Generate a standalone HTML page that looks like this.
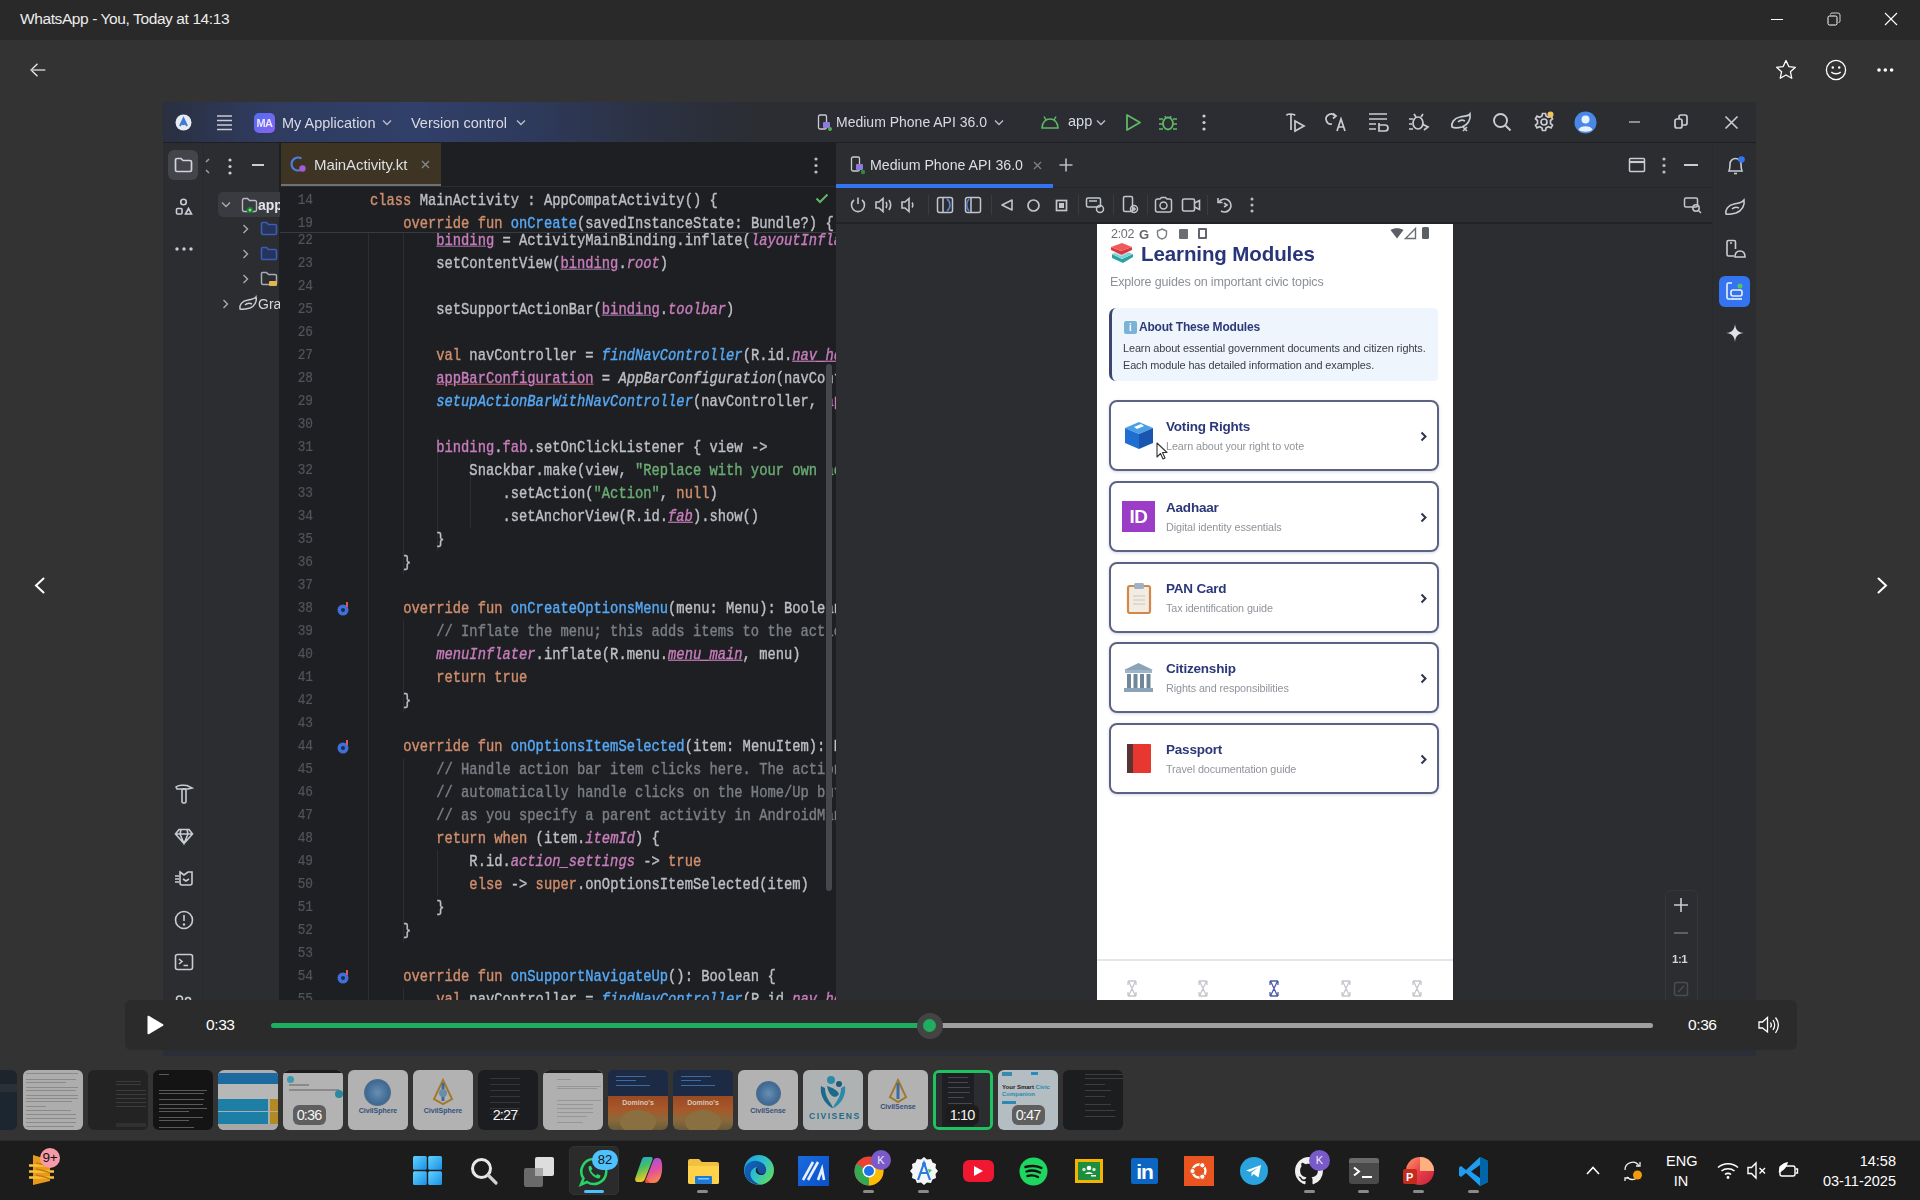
<!DOCTYPE html>
<html><head><meta charset="utf-8">
<style>
*{box-sizing:border-box;margin:0;padding:0}
html,body{width:1920px;height:1200px;overflow:hidden;background:#333333;font-family:"Liberation Sans",sans-serif;position:relative}
.a{position:absolute}
svg{position:absolute;overflow:visible}
#title{left:0;top:0;width:1920px;height:40px;background:#292929}
#title .t{left:20px;top:10px;color:#ececec;font-size:15.5px;letter-spacing:-0.4px;white-space:nowrap}
#video{left:163px;top:102px;width:1593px;height:954px;background:#1e1f22;overflow:hidden;filter:blur(0.45px)}
#ctrl{left:125px;top:1000px;width:1672px;height:50px;background:#2b2b2b;border-radius:6px}
#thumbs{left:0;top:1070px;width:1920px;height:60px}
#task{left:0;top:1140px;width:1920px;height:60px;background:#1c1c1c;border-top:1px solid #2c2c2c}
.ln{left:0;width:33px;text-align:right;font-family:"Liberation Mono",monospace;font-size:12.8px;line-height:23px;color:#50545b;white-space:pre;transform:scaleY(1.1);-webkit-text-stroke-width:0.2px}
.cd{left:90px;font-family:"Liberation Mono",monospace;font-size:13.8px;line-height:23px;color:#bcbec4;white-space:pre;transform:scaleY(1.15);-webkit-text-stroke-width:0.35px}
.k{color:#cf8e6d}.f{color:#56a8f5}.fi{color:#56a8f5;font-style:italic}.p{color:#c77dbb}.pi{color:#c77dbb;font-style:italic}
.pu{color:#c77dbb;text-decoration:underline;text-decoration-color:#8a6a9a}.piu{color:#c77dbb;font-style:italic;text-decoration:underline}
.pur{color:#c77dbb;text-decoration:underline;text-decoration-color:#c05a6a}.ti{font-style:italic}.s{color:#6aab73}.c{color:#7a7e85}
.card{left:12px;width:330px;height:71px;border:2px solid #5b6283;border-radius:8px;box-shadow:0 1px 3px rgba(80,90,160,.25)}
.ct{left:69px;font-size:13.5px;font-weight:bold;color:#2b3778;white-space:nowrap;letter-spacing:-0.2px}
.cs{left:69px;font-size:10.8px;color:#90949b;white-space:nowrap;letter-spacing:-0.1px}
.th{top:0;width:60px;height:60px;border-radius:6px;overflow:hidden}
.badge{top:35px;width:33px;height:20px;border-radius:6px;color:#f4f4f4;font-size:14.5px;line-height:20px;letter-spacing:-0.9px;text-align:center;text-indent:-1px}
.mono{font-family:"Liberation Mono",monospace}
</style></head><body>
<div id="title" class="a"><div class="t a">WhatsApp - You, Today at 14:13</div></div>

<div id="video" class="a">
 <!-- header -->
 <div class="a" style="left:0;top:0;width:1593px;height:41px;background:linear-gradient(90deg,#2a2f40 0%,#2f3b5e 6%,#31406a 16%,#2e3a5c 23%,#2c3244 30%,#2b2d33 37%,#2b2d30 100%);border-bottom:1px solid #1e1f22"></div>
 <!-- left strip -->
 <div class="a" style="left:0;top:41px;width:41px;height:857px;background:#2b2d30;border-right:1px solid #27292c"></div>
 <!-- project panel -->
 <div class="a" style="left:41px;top:41px;width:76px;height:857px;background:#2b2d30;border-right:1px solid #1e1f22"></div>
 <!-- editor -->
 <div class="a" style="left:117px;top:41px;width:556px;height:857px;background:#1e1f22"></div>
 <!-- devices panel -->
 <div class="a" style="left:673px;top:41px;width:876px;height:857px;background:#2b2d30;border-left:1px solid #1e1f22"></div>
 <!-- right strip -->
 <div class="a" style="left:1549px;top:41px;width:44px;height:857px;background:#2b2d30;border-left:1px solid #28292c"></div>
 <!-- bottom band -->
 <div class="a" style="left:0;top:0;width:1593px;height:41px;color:#dfe1e5;font-size:14px">
  <!-- AS logo -->
  <svg style="left:12px;top:12px" width="17" height="17" viewBox="0 0 17 17"><circle cx="8.5" cy="8.5" r="8" fill="#e8eaf0"/><path d="M5 12 L8.5 4.5 L12 12" stroke="#3b7bd6" stroke-width="2" fill="none"/><circle cx="8.5" cy="9" r="2.2" fill="#3b7bd6"/></svg>
  <!-- hamburger -->
  <svg style="left:53px;top:12px" width="17" height="17" viewBox="0 0 17 17"><g stroke="#c9ccd3" stroke-width="1.6"><path d="M1 2H16M1 6.5H16M1 11H16M1 15.5H16"/></g></svg>
  <div class="a" style="left:91px;top:11px;width:21px;height:20px;border-radius:5px;background:linear-gradient(135deg,#4f6ef0,#8a63f2);color:#e9e6ff;font-size:11px;font-weight:bold;line-height:20px;text-align:center;letter-spacing:-0.5px">MA</div>
  <div class="a" style="left:119px;top:13px;font-size:14.5px;color:#d8dbe3">My Application</div>
  <svg style="left:219px;top:17px" width="10" height="7" viewBox="0 0 10 7"><path d="M1 1.5L5 5.5L9 1.5" stroke="#b8bcc4" stroke-width="1.4" fill="none"/></svg>
  <div class="a" style="left:248px;top:13px;font-size:14.5px;color:#d8dbe3">Version control</div>
  <svg style="left:353px;top:17px" width="10" height="7" viewBox="0 0 10 7"><path d="M1 1.5L5 5.5L9 1.5" stroke="#b8bcc4" stroke-width="1.4" fill="none"/></svg>
  <!-- device -->
  <svg style="left:654px;top:12px" width="16" height="17" viewBox="0 0 16 17"><rect x="1.5" y="1" width="8" height="14" rx="1.5" stroke="#c9ccd3" stroke-width="1.3" fill="none"/><rect x="6" y="8" width="7" height="6" rx="1" fill="#8e7bd9"/><circle cx="13" cy="15" r="2" fill="#4caf50"/></svg>
  <div class="a" style="left:673px;top:12px;font-size:14px;color:#d8dbe3">Medium Phone API 36.0</div>
  <svg style="left:831px;top:17px" width="10" height="7" viewBox="0 0 10 7"><path d="M1 1.5L5 5.5L9 1.5" stroke="#b8bcc4" stroke-width="1.4" fill="none"/></svg>
  <!-- android app -->
  <svg style="left:877px;top:13px" width="20" height="15" viewBox="0 0 20 15"><path d="M2 13 C2 7 6 4 10 4 C14 4 18 7 18 13 Z" stroke="#5fb865" stroke-width="1.6" fill="none"/><path d="M4 1.5L6 5M16 1.5L14 5" stroke="#5fb865" stroke-width="1.5"/></svg>
  <div class="a" style="left:905px;top:11px;font-size:14.5px;color:#d8dbe3">app</div>
  <svg style="left:933px;top:17px" width="10" height="7" viewBox="0 0 10 7"><path d="M1 1.5L5 5.5L9 1.5" stroke="#b8bcc4" stroke-width="1.4" fill="none"/></svg>
  <!-- run -->
  <svg style="left:962px;top:11px" width="17" height="19" viewBox="0 0 17 19"><path d="M2 2 L15 9.5 L2 17 Z" stroke="#5fb865" stroke-width="1.8" fill="none" stroke-linejoin="round"/></svg>
  <!-- debug -->
  <svg style="left:995px;top:11px" width="20" height="19" viewBox="0 0 20 19"><ellipse cx="10" cy="10.5" rx="5" ry="6" stroke="#5fb865" stroke-width="1.8" fill="none"/><path d="M1 6H5M15 6H19M1 11H5M15 11H19M1 16H5M15 16H19M7 3L8 5M13 3L12 5" stroke="#5fb865" stroke-width="1.6"/></svg>
  <!-- dots -->
  <svg style="left:1039px;top:12px" width="4" height="17" viewBox="0 0 4 17"><g fill="#c9ccd3"><circle cx="2" cy="2" r="1.6"/><circle cx="2" cy="8.5" r="1.6"/><circle cx="2" cy="15" r="1.6"/></g></svg>
  <!-- right icons -->
  <svg style="left:1122px;top:10px" width="22" height="21" viewBox="0 0 22 21"><g stroke="#c9ccd3" stroke-width="1.7" fill="none"><path d="M1.5 3.5 C2 1.5 9 1.5 10 3.5 M6 2.5 V18"/><path d="M10 9 L19 14 L10 19 Z"/></g></svg>
  <svg style="left:1164px;top:10px" width="20" height="21" viewBox="0 0 20 21"><g stroke="#c9ccd3" stroke-width="1.7" fill="none"><path d="M8 4 A5 5 0 1 0 5 12"/><path d="M6 1.5 L9 4 L6 6.5"/><path d="M10 19 L14 7 L18 19 M11.5 15 H16.5"/></g></svg>
  <svg style="left:1205px;top:10px" width="20" height="21" viewBox="0 0 20 21"><g stroke="#c9ccd3" stroke-width="1.7" fill="none"><path d="M1 2H19M1 7H19M1 12H8M1 17H8"/><path d="M11 11 V19 H17 A3 3 0 0 0 17 13 H11"/></g></svg>
  <svg style="left:1245px;top:9px" width="22" height="22" viewBox="0 0 22 22"><g stroke="#c9ccd3" stroke-width="1.7" fill="none"><ellipse cx="10" cy="12" rx="5" ry="6"/><path d="M1 8H5M1 13H4M1 18H5M15 3L13 6M6 3L8 6"/><path d="M14 13 L20 16 L16 19"/></g></svg>
  <svg style="left:1287px;top:10px" width="22" height="21" viewBox="0 0 22 21"><g stroke="#c9ccd3" stroke-width="1.7" fill="none"><path d="M2 15 C1 11 4 6 10 5 C15 4 19 4 20 2 C21 7 18 13 12 15 C8 16 4 16 2 15 Z"/><path d="M8 10 C10 8 13 8 15 9"/><path d="M13 15 L17 19 M17 15 L13 19"/></g></svg>
  <svg style="left:1329px;top:10px" width="20" height="21" viewBox="0 0 20 21"><g stroke="#c9ccd3" stroke-width="1.9" fill="none"><circle cx="8.5" cy="8.5" r="6.5"/><path d="M13.5 13.5 L18.5 18.5"/></g></svg>
  <svg style="left:1370px;top:9px" width="22" height="22" viewBox="0 0 22 22"><g stroke="#c9ccd3" stroke-width="1.7" fill="none"><path d="M10 2 L13 2 L13.6 4.6 L16 5.8 L18.5 4.7 L20 7.3 L18 9 L18 12 L20 13.7 L18.5 16.3 L16 15.2 L13.6 16.4 L13 19 L10 19 L9.4 16.4 L7 15.2 L4.5 16.3 L3 13.7 L5 12 L5 9 L3 7.3 L4.5 4.7 L7 5.8 L9.4 4.6 Z" transform="translate(-0.5,0.5)"/><circle cx="11" cy="11" r="3"/></g><circle cx="17.5" cy="3.5" r="3" fill="#f2c55c"/></svg>
  <svg style="left:1411px;top:9px" width="23" height="23" viewBox="0 0 23 23"><circle cx="11.5" cy="11.5" r="11" fill="#4a88e8"/><circle cx="11.5" cy="8.5" r="4" fill="#e9f0ff"/><path d="M4.5 18.5 C6 14 17 14 18.5 18.5 C16 21.5 7 21.5 4.5 18.5 Z" fill="#e9f0ff"/></svg>
  <div class="a" style="left:1466px;top:19px;width:11px;height:2px;background:#8b8e95"></div>
  <svg style="left:1510px;top:11px" width="17" height="17" viewBox="0 0 17 17"><g stroke="#c9ccd3" stroke-width="1.7" fill="none"><rect x="2" y="6" width="7" height="9" rx="2"/><path d="M6 6 V4 A2 2 0 0 1 8 2 H12 A2 2 0 0 1 14 4 V10 A2 2 0 0 1 12 12 H9"/></g></svg>
  <svg style="left:1561px;top:13px" width="15" height="15" viewBox="0 0 15 15"><path d="M1.5 1.5L13.5 13.5M13.5 1.5L1.5 13.5" stroke="#c9ccd3" stroke-width="1.6"/></svg>
 </div>

 <!-- left strip icons -->
 <div class="a" style="left:5px;top:48px;width:30px;height:30px;border-radius:6px;background:#43454a"></div>
 <svg style="left:11px;top:55px" width="19" height="16" viewBox="0 0 19 16"><path d="M1.5 3 A1.5 1.5 0 0 1 3 1.5 H7 L9 3.5 H16 A1.5 1.5 0 0 1 17.5 5 V13 A1.5 1.5 0 0 1 16 14.5 H3 A1.5 1.5 0 0 1 1.5 13 Z" stroke="#d0d3d9" stroke-width="1.7" fill="none"/></svg>
 <svg style="left:12px;top:96px" width="18" height="18" viewBox="0 0 18 18"><g stroke="#c9ccd3" stroke-width="1.6" fill="none"><circle cx="8.5" cy="4" r="2.8"/><rect x="1.5" y="10.5" width="5.5" height="5.5" rx="1"/><path d="M10.5 16 L13.5 10.5 L16.5 16 Z"/></g></svg>
 <svg style="left:12px;top:145px" width="18" height="4" viewBox="0 0 18 4"><g fill="#c9ccd3"><circle cx="2" cy="2" r="1.7"/><circle cx="9" cy="2" r="1.7"/><circle cx="16" cy="2" r="1.7"/></g></svg>
 <svg style="left:12px;top:682px" width="19" height="20" viewBox="0 0 19 20"><g stroke="#c9ccd3" stroke-width="1.6" fill="none"><path d="M1 3 C3 1 9 1 12 1.5 L17 4 L13 5 H2 Z"/><rect x="7" y="5" width="4" height="14" rx="1.5"/></g></svg>
 <svg style="left:11px;top:726px" width="20" height="17" viewBox="0 0 20 17"><g stroke="#c9ccd3" stroke-width="1.6" fill="none"><path d="M5 1.5 H15 L18.5 6 L10 15.5 L1.5 6 Z M1.5 6 H18.5 M7 1.5 L6 6 L10 15.5 L14 6 L13 1.5"/></g></svg>
 <svg style="left:11px;top:768px" width="20" height="17" viewBox="0 0 20 17"><g stroke="#c9ccd3" stroke-width="1.6" fill="none"><path d="M6 2 L10 5 L14 2 L18 2 V13 A2 2 0 0 1 16 15 H8 A2 2 0 0 1 6 13 Z M1 6H5M1 9H5M1 12H5"/><path d="M9 9 L12 11 L15 9"/></g></svg>
 <svg style="left:11px;top:808px" width="20" height="20" viewBox="0 0 20 20"><g stroke="#c9ccd3" stroke-width="1.6" fill="none"><circle cx="10" cy="10" r="8.5"/><path d="M10 5 V11"/></g><circle cx="10" cy="14.5" r="1.2" fill="#c9ccd3"/></svg>
 <svg style="left:11px;top:851px" width="20" height="18" viewBox="0 0 20 18"><g stroke="#c9ccd3" stroke-width="1.6" fill="none"><rect x="1.5" y="1.5" width="17" height="15" rx="2"/><path d="M5 6 L8 8.5 L5 11 M9.5 12.5 H14"/></g></svg>
 <svg style="left:12px;top:892px" width="18" height="10" viewBox="0 0 18 10"><g stroke="#c9ccd3" stroke-width="1.6" fill="none"><circle cx="4.5" cy="5" r="3"/><circle cx="13" cy="6" r="2.5"/></g></svg>

 <div class="a" style="left:41px;top:41px;width:76px;height:857px;overflow:hidden">
 <!-- project panel header -->
 <svg style="left:0px;top:14px" width="6" height="20" viewBox="0 0 6 20"><g stroke="#9a9da4" stroke-width="1.5" fill="none"><path d="M5 2 L2 5 M2 13 L5 16"/></g></svg>
 <svg style="left:24px;top:15px" width="4" height="17" viewBox="0 0 4 17"><g fill="#c9ccd3"><circle cx="2" cy="2" r="1.6"/><circle cx="2" cy="8.5" r="1.6"/><circle cx="2" cy="15" r="1.6"/></g></svg>
 <div class="a" style="left:48px;top:21px;width:12px;height:2px;background:#c9ccd3"></div>
 <!-- tree -->
 <div class="a" style="left:14px;top:49px;width:62px;height:25px;border-radius:5px 0 0 5px;background:#393b40"></div>
 <svg style="left:17px;top:58px" width="10" height="7" viewBox="0 0 10 7"><path d="M1 1.5L5 5.5L9 1.5" stroke="#a8abb2" stroke-width="1.4" fill="none"/></svg>
 <svg style="left:37px;top:54px" width="18" height="17" viewBox="0 0 18 17"><path d="M1.5 3 A1.5 1.5 0 0 1 3 1.5 H6.5 L8.5 3.5 H14 A1.5 1.5 0 0 1 15.5 5 V13 A1.5 1.5 0 0 1 14 14.5 H3 A1.5 1.5 0 0 1 1.5 13 Z" stroke="#b8bbc2" stroke-width="1.4" fill="none"/><circle cx="9" cy="13" r="3.3" fill="#1e7a2e"/><circle cx="9" cy="13" r="1.5" fill="#7ee08a"/></svg>
 <div class="a" style="left:54px;top:54px;font-size:14px;font-weight:bold;color:#e2e4e8">app</div>
 <svg style="left:38px;top:81px" width="7" height="10" viewBox="0 0 7 10"><path d="M1.5 1L5.5 5L1.5 9" stroke="#a8abb2" stroke-width="1.4" fill="none"/></svg>
 <svg style="left:56px;top:78px" width="18" height="15" viewBox="0 0 18 15"><path d="M1.5 2.5 A1 1 0 0 1 2.5 1.5 H6.5 L8.5 3.5 H15 A1.5 1.5 0 0 1 16.5 5 V12 A1.5 1.5 0 0 1 15 13.5 H3 A1.5 1.5 0 0 1 1.5 12 Z" stroke="#3b5db4" stroke-width="1.6" fill="#26335c"/></svg>
 <svg style="left:38px;top:106px" width="7" height="10" viewBox="0 0 7 10"><path d="M1.5 1L5.5 5L1.5 9" stroke="#a8abb2" stroke-width="1.4" fill="none"/></svg>
 <svg style="left:56px;top:103px" width="18" height="15" viewBox="0 0 18 15"><path d="M1.5 2.5 A1 1 0 0 1 2.5 1.5 H6.5 L8.5 3.5 H15 A1.5 1.5 0 0 1 16.5 5 V12 A1.5 1.5 0 0 1 15 13.5 H3 A1.5 1.5 0 0 1 1.5 12 Z" stroke="#3b5db4" stroke-width="1.6" fill="#26335c"/></svg>
 <svg style="left:38px;top:131px" width="7" height="10" viewBox="0 0 7 10"><path d="M1.5 1L5.5 5L1.5 9" stroke="#a8abb2" stroke-width="1.4" fill="none"/></svg>
 <svg style="left:56px;top:128px" width="18" height="17" viewBox="0 0 18 17"><path d="M1.5 2.5 A1 1 0 0 1 2.5 1.5 H6.5 L8.5 3.5 H15 A1.5 1.5 0 0 1 16.5 5 V12 A1.5 1.5 0 0 1 15 13.5 H3 A1.5 1.5 0 0 1 1.5 12 Z" stroke="#a8abb2" stroke-width="1.5" fill="none"/><rect x="9" y="10" width="8" height="5" rx="1" fill="#e0b74a"/></svg>
 <svg style="left:18px;top:156px" width="7" height="10" viewBox="0 0 7 10"><path d="M1.5 1L5.5 5L1.5 9" stroke="#a8abb2" stroke-width="1.4" fill="none"/></svg>
 <svg style="left:34px;top:152px" width="20" height="17" viewBox="0 0 20 17"><g stroke="#c9ccd3" stroke-width="1.5" fill="none"><path d="M2 14 C1 10 4 6 10 5 C14 4 17 4 18 2 C19 6 17 11 12 13 C8 14 4 14.5 2 14 Z"/><path d="M7 10 C9 8 12 8 14 9"/></g></svg>
 <div class="a" style="left:54px;top:153px;font-size:14px;color:#d5d8dd;white-space:nowrap;width:22px;overflow:hidden">Gradle</div>
 </div>

 <div class="a" style="left:117px;top:41px;width:556px;height:857px;overflow:hidden;background:#1e1f22" id="ed">
  <div class="a" style="left:1px;top:0;width:160px;height:43px;background:#3d3424"></div>
  <div class="a" style="left:1px;top:41px;width:160px;height:3px;background:#6e7176"></div>
  <div class="a" style="left:0;top:43px;width:556px;height:1px;background:#2b2d30"></div>
  <svg style="left:10px;top:13px" width="17" height="17" viewBox="0 0 17 17"><circle cx="8" cy="8" r="6.5" stroke="#4d7ee0" stroke-width="2.2" fill="none" stroke-dasharray="30 10" transform="rotate(30 8 8)"/><circle cx="12.5" cy="12.5" r="3.2" fill="#a75ad6"/></svg>
  <div class="a" style="left:34px;top:13px;font-size:15px;color:#dcdfe4;letter-spacing:-0.1px">MainActivity.kt</div>
  <svg style="left:141px;top:17px" width="9" height="9" viewBox="0 0 9 9"><path d="M1 1L8 8M8 1L1 8" stroke="#868a91" stroke-width="1.3"/></svg>
  <svg style="left:534px;top:14px" width="4" height="17" viewBox="0 0 4 17"><g fill="#b9bcc3"><circle cx="2" cy="2" r="1.6"/><circle cx="2" cy="8.5" r="1.6"/><circle cx="2" cy="15" r="1.6"/></g></svg>
  <div class="a" style="left:88px;top:90.0px;width:1px;height:801.5px;background:#2c2e33"></div>
  <div class="a" style="left:123px;top:90.0px;width:1px;height:340.9px;background:#2c2e33"></div>
  <div class="a" style="left:157px;top:292.7px;width:1px;height:115.1px;background:#2c2e33"></div>
  <div class="a" style="left:190px;top:315.8px;width:1px;height:69.1px;background:#2c2e33"></div>
  <div class="a" style="left:123px;top:477.0px;width:1px;height:92.1px;background:#2c2e33"></div>
  <div class="a" style="left:123px;top:615.1px;width:1px;height:184.2px;background:#2c2e33"></div>
  <div class="a" style="left:157px;top:707.3px;width:1px;height:46.1px;background:#2c2e33"></div>
  <div class="a" style="left:123px;top:845.4px;width:1px;height:46.1px;background:#2c2e33"></div>
  <div class="a ln" style="top:85.5px">22</div>
  <div class="a cd" style="top:85.5px">&#32;&#32;&#32;&#32;&#32;&#32;&#32;&#32;<span class="pu">binding</span>&#32;=&#32;ActivityMainBinding.inflate(<span class="pi">layoutInflater</span>)</div>
  <div class="a ln" style="top:108.5px">23</div>
  <div class="a cd" style="top:108.5px">&#32;&#32;&#32;&#32;&#32;&#32;&#32;&#32;setContentView(<span class="pu">binding</span>.<span class="pi">root</span>)</div>
  <div class="a ln" style="top:131.5px">24</div>
  <div class="a ln" style="top:154.5px">25</div>
  <div class="a cd" style="top:154.5px">&#32;&#32;&#32;&#32;&#32;&#32;&#32;&#32;setSupportActionBar(<span class="pu">binding</span>.<span class="pi">toolbar</span>)</div>
  <div class="a ln" style="top:177.6px">26</div>
  <div class="a ln" style="top:200.6px">27</div>
  <div class="a cd" style="top:200.6px">&#32;&#32;&#32;&#32;&#32;&#32;&#32;&#32;<span class="k">val</span>&#32;navController&#32;=&#32;<span class="fi">findNavController</span>(R.id.<span class="piu">nav_host_fragment_content_main</span>)</div>
  <div class="a ln" style="top:223.6px">28</div>
  <div class="a cd" style="top:223.6px">&#32;&#32;&#32;&#32;&#32;&#32;&#32;&#32;<span class="pur">appBarConfiguration</span>&#32;=&#32;<span class="ti">AppBarConfiguration</span>(navController.<span class="pi">graph</span>)</div>
  <div class="a ln" style="top:246.7px">29</div>
  <div class="a cd" style="top:246.7px">&#32;&#32;&#32;&#32;&#32;&#32;&#32;&#32;<span class="fi">setupActionBarWithNavController</span>(navController,&#32;<span class="p">appBarConfiguration</span>)</div>
  <div class="a ln" style="top:269.7px">30</div>
  <div class="a ln" style="top:292.7px">31</div>
  <div class="a cd" style="top:292.7px">&#32;&#32;&#32;&#32;&#32;&#32;&#32;&#32;<span class="p">binding</span>.<span class="p">fab</span>.setOnClickListener&#32;{&#32;view&#32;-></div>
  <div class="a ln" style="top:315.8px">32</div>
  <div class="a cd" style="top:315.8px">&#32;&#32;&#32;&#32;&#32;&#32;&#32;&#32;&#32;&#32;&#32;&#32;Snackbar.make(view,&#32;<span class="s">"Replace&#32;with&#32;your&#32;own&#32;action"</span>,&#32;Snackbar.<span class="pi">LENGTH_LONG</span>)</div>
  <div class="a ln" style="top:338.8px">33</div>
  <div class="a cd" style="top:338.8px">&#32;&#32;&#32;&#32;&#32;&#32;&#32;&#32;&#32;&#32;&#32;&#32;&#32;&#32;&#32;&#32;.setAction(<span class="s">"Action"</span>,&#32;<span class="k">null</span>)</div>
  <div class="a ln" style="top:361.8px">34</div>
  <div class="a cd" style="top:361.8px">&#32;&#32;&#32;&#32;&#32;&#32;&#32;&#32;&#32;&#32;&#32;&#32;&#32;&#32;&#32;&#32;.setAnchorView(R.id.<span class="piu">fab</span>).show()</div>
  <div class="a ln" style="top:384.8px">35</div>
  <div class="a cd" style="top:384.8px">&#32;&#32;&#32;&#32;&#32;&#32;&#32;&#32;}</div>
  <div class="a ln" style="top:407.9px">36</div>
  <div class="a cd" style="top:407.9px">&#32;&#32;&#32;&#32;}</div>
  <div class="a ln" style="top:430.9px">37</div>
  <div class="a ln" style="top:453.9px">38</div>
  <div class="a cd" style="top:453.9px">&#32;&#32;&#32;&#32;<span class="k">override&#32;fun</span>&#32;<span class="f">onCreateOptionsMenu</span>(menu:&#32;Menu):&#32;Boolean&#32;{</div>
  <div class="a ln" style="top:477.0px">39</div>
  <div class="a cd" style="top:477.0px">&#32;&#32;&#32;&#32;&#32;&#32;&#32;&#32;<span class="c">//&#32;Inflate&#32;the&#32;menu;&#32;this&#32;adds&#32;items&#32;to&#32;the&#32;action&#32;bar&#32;if&#32;it&#32;is&#32;present.</span></div>
  <div class="a ln" style="top:500.0px">40</div>
  <div class="a cd" style="top:500.0px">&#32;&#32;&#32;&#32;&#32;&#32;&#32;&#32;<span class="pi">menuInflater</span>.inflate(R.menu.<span class="piu">menu_main</span>,&#32;menu)</div>
  <div class="a ln" style="top:523.0px">41</div>
  <div class="a cd" style="top:523.0px">&#32;&#32;&#32;&#32;&#32;&#32;&#32;&#32;<span class="k">return&#32;true</span></div>
  <div class="a ln" style="top:546.1px">42</div>
  <div class="a cd" style="top:546.1px">&#32;&#32;&#32;&#32;}</div>
  <div class="a ln" style="top:569.1px">43</div>
  <div class="a ln" style="top:592.1px">44</div>
  <div class="a cd" style="top:592.1px">&#32;&#32;&#32;&#32;<span class="k">override&#32;fun</span>&#32;<span class="f">onOptionsItemSelected</span>(item:&#32;MenuItem):&#32;Boolean&#32;{</div>
  <div class="a ln" style="top:615.1px">45</div>
  <div class="a cd" style="top:615.1px">&#32;&#32;&#32;&#32;&#32;&#32;&#32;&#32;<span class="c">//&#32;Handle&#32;action&#32;bar&#32;item&#32;clicks&#32;here.&#32;The&#32;action&#32;bar&#32;will</span></div>
  <div class="a ln" style="top:638.2px">46</div>
  <div class="a cd" style="top:638.2px">&#32;&#32;&#32;&#32;&#32;&#32;&#32;&#32;<span class="c">//&#32;automatically&#32;handle&#32;clicks&#32;on&#32;the&#32;Home/Up&#32;button,&#32;so&#32;long</span></div>
  <div class="a ln" style="top:661.2px">47</div>
  <div class="a cd" style="top:661.2px">&#32;&#32;&#32;&#32;&#32;&#32;&#32;&#32;<span class="c">//&#32;as&#32;you&#32;specify&#32;a&#32;parent&#32;activity&#32;in&#32;AndroidManifest.xml.</span></div>
  <div class="a ln" style="top:684.2px">48</div>
  <div class="a cd" style="top:684.2px">&#32;&#32;&#32;&#32;&#32;&#32;&#32;&#32;<span class="k">return&#32;when</span>&#32;(item.<span class="pi">itemId</span>)&#32;{</div>
  <div class="a ln" style="top:707.3px">49</div>
  <div class="a cd" style="top:707.3px">&#32;&#32;&#32;&#32;&#32;&#32;&#32;&#32;&#32;&#32;&#32;&#32;R.id.<span class="pi">action_settings</span>&#32;->&#32;<span class="k">true</span></div>
  <div class="a ln" style="top:730.3px">50</div>
  <div class="a cd" style="top:730.3px">&#32;&#32;&#32;&#32;&#32;&#32;&#32;&#32;&#32;&#32;&#32;&#32;<span class="k">else</span>&#32;->&#32;<span class="k">super</span>.onOptionsItemSelected(item)</div>
  <div class="a ln" style="top:753.3px">51</div>
  <div class="a cd" style="top:753.3px">&#32;&#32;&#32;&#32;&#32;&#32;&#32;&#32;}</div>
  <div class="a ln" style="top:776.4px">52</div>
  <div class="a cd" style="top:776.4px">&#32;&#32;&#32;&#32;}</div>
  <div class="a ln" style="top:799.4px">53</div>
  <div class="a ln" style="top:822.4px">54</div>
  <div class="a cd" style="top:822.4px">&#32;&#32;&#32;&#32;<span class="k">override&#32;fun</span>&#32;<span class="f">onSupportNavigateUp</span>():&#32;Boolean&#32;{</div>
  <div class="a ln" style="top:845.4px">55</div>
  <div class="a cd" style="top:845.4px">&#32;&#32;&#32;&#32;&#32;&#32;&#32;&#32;<span class="k">val</span>&#32;navController&#32;=&#32;<span class="fi">findNavController</span>(R.id.<span class="piu">nav_host_fragment_content_main</span>)</div>
  <div class="a ln" style="top:868.5px">56</div>
  <div class="a cd" style="top:868.5px">&#32;&#32;&#32;&#32;&#32;&#32;&#32;&#32;<span class="k">return</span>&#32;navController.<span class="fi">navigateUp</span>(<span class="p">appBarConfiguration</span>)</div>
  <svg style="left:56px;top:457.5px" width="16" height="16" viewBox="0 0 16 16"><circle cx="7" cy="9" r="5.5" fill="#3f6fd8"/><circle cx="7" cy="9" r="2" fill="#1e2a4a"/><path d="M11 1 V6" stroke="#e05555" stroke-width="2"/></svg>
  <svg style="left:56px;top:595.6px" width="16" height="16" viewBox="0 0 16 16"><circle cx="7" cy="9" r="5.5" fill="#3f6fd8"/><circle cx="7" cy="9" r="2" fill="#1e2a4a"/><path d="M11 1 V6" stroke="#e05555" stroke-width="2"/></svg>
  <svg style="left:56px;top:825.9px" width="16" height="16" viewBox="0 0 16 16"><circle cx="7" cy="9" r="5.5" fill="#3f6fd8"/><circle cx="7" cy="9" r="2" fill="#1e2a4a"/><path d="M11 1 V6" stroke="#e05555" stroke-width="2"/></svg>
  <div class="a" style="left:0;top:44px;width:556px;height:46px;background:#1e1f22;border-bottom:1px solid #393b40"></div>
  <div class="a ln" style="top:45.5px">14</div>
  <div class="a cd" style="top:45.5px"><span class="k">class</span>&#32;MainActivity&#32;:&#32;AppCompatActivity()&#32;{</div>
  <div class="a ln" style="top:68.5px">19</div>
  <div class="a cd" style="top:68.5px">&#32;&#32;&#32;&#32;<span class="k">override&#32;fun</span>&#32;<span class="f">onCreate</span>(savedInstanceState:&#32;Bundle?)&#32;{</div>
  <svg style="left:535px;top:50px" width="14" height="11" viewBox="0 0 14 11"><path d="M1.5 5.5L5 9L12.5 1.5" stroke="#5fb865" stroke-width="2" fill="none"/></svg>
  <div class="a" style="left:546px;top:221px;width:6px;height:527px;border-radius:3px;background:#45474c"></div>
 </div>

 <div class="a" style="left:673px;top:41px;width:876px;height:857px;overflow:hidden;background:#2b2d30">
  <!-- tab -->
  <svg style="left:14px;top:13px" width="18" height="19" viewBox="0 0 18 19"><rect x="1.5" y="1" width="8" height="14" rx="1.5" stroke="#c9ccd3" stroke-width="1.3" fill="none"/><rect x="6" y="8" width="7" height="6" rx="1" fill="#8e7bd9"/><circle cx="13" cy="16" r="2.2" fill="#2e8b3e"/></svg>
  <div class="a" style="left:34px;top:14px;font-size:14.2px;color:#dcdfe4;white-space:nowrap">Medium Phone API 36.0</div>
  <svg style="left:197px;top:18px" width="9" height="9" viewBox="0 0 9 9"><path d="M1 1L8 8M8 1L1 8" stroke="#7d8188" stroke-width="1.3"/></svg>
  <svg style="left:223px;top:15px" width="14" height="14" viewBox="0 0 14 14"><path d="M7 0.5V13.5M0.5 7H13.5" stroke="#b9bcc3" stroke-width="1.6"/></svg>
  <div class="a" style="left:0;top:41px;width:217px;height:4px;background:#3574f0"></div>
  <div class="a" style="left:217px;top:44px;width:659px;height:1px;background:#25272a"></div>
  <svg style="left:792px;top:14px" width="18" height="16" viewBox="0 0 18 16"><rect x="1.5" y="1.5" width="15" height="13" rx="1" stroke="#c9ccd3" stroke-width="1.5" fill="none"/><path d="M1.5 5H16.5" stroke="#c9ccd3" stroke-width="2.2"/></svg>
  <svg style="left:826px;top:14px" width="4" height="17" viewBox="0 0 4 17"><g fill="#b9bcc3"><circle cx="2" cy="2" r="1.6"/><circle cx="2" cy="8.5" r="1.6"/><circle cx="2" cy="15" r="1.6"/></g></svg>
  <div class="a" style="left:848px;top:21px;width:14px;height:2px;background:#c9ccd3"></div>
  <!-- toolbar -->
  <div class="a" style="left:0;top:79px;width:876px;height:2px;background:#222326"></div>
  <g></g>
  <svg style="left:13px;top:53px" width="18" height="18" viewBox="0 0 18 18"><g stroke="#c2c5cc" stroke-width="1.6" fill="none"><path d="M5 4 A6.5 6.5 0 1 0 13 4"/><path d="M9 1.5V8"/></g></svg>
  <svg style="left:38px;top:53px" width="20" height="18" viewBox="0 0 20 18"><g stroke="#c2c5cc" stroke-width="1.6" fill="none"><path d="M2 6H5L9 2.5V15.5L5 12H2Z"/><path d="M12 6 C13 7.5 13 10.5 12 12 M15 4 C17 7 17 11 15 14"/></g></svg>
  <svg style="left:64px;top:53px" width="20" height="18" viewBox="0 0 20 18"><g stroke="#c2c5cc" stroke-width="1.6" fill="none"><path d="M2 6H5L9 2.5V15.5L5 12H2Z"/><path d="M12 6.5 C13 7.5 13 10.5 12 11.5"/></g></svg>
  <div class="a" style="left:92px;top:52px;width:1px;height:20px;background:#3a3c40"></div>
  <svg style="left:100px;top:53px" width="18" height="18" viewBox="0 0 18 18"><g stroke="#c2c5cc" stroke-width="1.5" fill="none"><rect x="1.5" y="1.5" width="15" height="15" rx="2"/><path d="M7 1.5V16.5"/></g><path d="M11 3 C15 6 15 12 11 15" stroke="#5b82d6" stroke-width="1.6" fill="none"/></svg>
  <svg style="left:128px;top:53px" width="18" height="18" viewBox="0 0 18 18"><g stroke="#c2c5cc" stroke-width="1.5" fill="none"><rect x="1.5" y="1.5" width="15" height="15" rx="2"/><path d="M7 1.5V16.5"/></g><path d="M5 3 C2 6 2 12 5 15" stroke="#5b82d6" stroke-width="1.6" fill="none"/></svg>
  <div class="a" style="left:155px;top:52px;width:1px;height:20px;background:#3a3c40"></div>
  <svg style="left:164px;top:55px" width="14" height="14" viewBox="0 0 14 14"><path d="M12 2V12L2 7Z" stroke="#c2c5cc" stroke-width="1.6" fill="none" stroke-linejoin="round"/></svg>
  <svg style="left:190px;top:55px" width="15" height="15" viewBox="0 0 15 15"><circle cx="7.5" cy="7.5" r="5.5" stroke="#c2c5cc" stroke-width="1.7" fill="none"/></svg>
  <svg style="left:219px;top:56px" width="13" height="13" viewBox="0 0 13 13"><rect x="1.5" y="1.5" width="10" height="10" stroke="#c2c5cc" stroke-width="1.7" fill="none"/><rect x="4" y="4" width="5" height="5" fill="#c2c5cc"/></svg>
  <div class="a" style="left:242px;top:52px;width:1px;height:20px;background:#3a3c40"></div>
  <svg style="left:249px;top:53px" width="20" height="18" viewBox="0 0 20 18"><g stroke="#c2c5cc" stroke-width="1.5" fill="none"><rect x="1.5" y="2" width="14" height="9" rx="1.5"/><path d="M4 5H12"/><circle cx="15" cy="13" r="3.5"/></g></svg>
  <div class="a" style="left:277px;top:52px;width:1px;height:20px;background:#3a3c40"></div>
  <svg style="left:286px;top:52px" width="18" height="20" viewBox="0 0 18 20"><g stroke="#c2c5cc" stroke-width="1.5" fill="none"><rect x="1.5" y="1.5" width="9" height="15" rx="1.5"/><circle cx="12" cy="14" r="3.5"/><path d="M12 12V16M10 14H14"/></g></svg>
  <div class="a" style="left:311px;top:52px;width:1px;height:20px;background:#3a3c40"></div>
  <svg style="left:318px;top:53px" width="19" height="18" viewBox="0 0 19 18"><g stroke="#c2c5cc" stroke-width="1.5" fill="none"><path d="M1.5 5 A2 2 0 0 1 3.5 3 H6 L7.5 1.5 H11.5 L13 3 H15.5 A2 2 0 0 1 17.5 5 V14 A2 2 0 0 1 15.5 16 H3.5 A2 2 0 0 1 1.5 14 Z"/><circle cx="9.5" cy="9.5" r="3.5"/></g></svg>
  <svg style="left:345px;top:54px" width="20" height="16" viewBox="0 0 20 16"><g stroke="#c2c5cc" stroke-width="1.6" fill="none"><rect x="1.5" y="2" width="12" height="12" rx="1.5"/><path d="M13.5 6 L18.5 3.5 V12.5 L13.5 10"/></g></svg>
  <div class="a" style="left:371px;top:52px;width:1px;height:20px;background:#3a3c40"></div>
  <svg style="left:380px;top:53px" width="18" height="18" viewBox="0 0 18 18"><g stroke="#c2c5cc" stroke-width="1.6" fill="none"><path d="M3 6 A6.5 6.5 0 1 1 5 15"/><path d="M2 2 V6.5 H6.5"/><path d="M8 7 L11 9 L8 11"/></g></svg>
  <svg style="left:414px;top:54px" width="4" height="16" viewBox="0 0 4 16"><g fill="#b9bcc3"><circle cx="2" cy="2" r="1.5"/><circle cx="2" cy="8" r="1.5"/><circle cx="2" cy="14" r="1.5"/></g></svg>
  <svg style="left:847px;top:53px" width="19" height="18" viewBox="0 0 19 18"><g stroke="#c2c5cc" stroke-width="1.5" fill="none"><rect x="1.5" y="2" width="13" height="9" rx="1.5"/><circle cx="13" cy="12" r="3.2"/><path d="M15.5 14.5 L18 17"/></g></svg>
  <!-- phone -->
  <div class="a" id="phone" style="left:261px;top:81px;width:356px;height:840px;background:#ffffff;overflow:hidden">
   <!-- status bar -->
   <div class="a" style="left:14px;top:3px;font-size:12.5px;color:#6b6f75;letter-spacing:-0.3px">2:02</div>
   <div class="a" style="left:42px;top:3px;font-size:13px;font-weight:bold;color:#62666c">G</div>
   <svg style="left:59px;top:4px" width="12" height="12" viewBox="0 0 12 12"><path d="M6 1 L10.5 3 V6 C10.5 9 8 10.5 6 11 C4 10.5 1.5 9 1.5 6 V3 Z" stroke="#7a7e84" stroke-width="1.4" fill="none"/></svg>
   <div class="a" style="left:82px;top:5px;width:9px;height:10px;background:#6a6e74;border-radius:1px"></div>
   <div class="a" style="left:101px;top:4px;width:9px;height:11px;border:2px solid #62666c;border-radius:1px"></div>
   <svg style="left:293px;top:4px" width="14" height="11" viewBox="0 0 14 11"><path d="M0.5 2 C4 -0.5 10 -0.5 13.5 2 L7 10.5 Z" fill="#5c6066"/></svg>
   <svg style="left:308px;top:4px" width="11" height="11" viewBox="0 0 11 11"><path d="M10.5 0.5 V10.5 H0.5 Z" stroke="#6a6e74" stroke-width="1.4" fill="none"/></svg>
   <div class="a" style="left:325px;top:3px;width:7px;height:12px;background:#5c6066;border-radius:1.5px"></div>
   <!-- title -->
   <svg style="left:13px;top:18px" width="25" height="23" viewBox="0 0 25 23"><path d="M2 16 L13 21 L23 15 L23 12 L12 17 L2 12 Z" fill="#2aa3a0"/><path d="M2 12 L12 17 L23 12 L13 8 Z" fill="#7fd3d8"/><path d="M1 8 L12 13 L22 8 L22 5 L11 9 L1 5 Z" fill="#d9363e"/><path d="M1 5 L11 9 L22 5 L12 1 Z" fill="#f05a5f"/><path d="M2 9.5 L11 13.5 L21 9" stroke="#ffdede" stroke-width="0.8" fill="none"/></svg>
   <div class="a" style="left:44px;top:18px;font-size:20.5px;font-weight:bold;color:#283578;white-space:nowrap;letter-spacing:-0.1px">Learning Modules</div>
   <div class="a" style="left:13px;top:51px;font-size:12.5px;color:#8b9097;white-space:nowrap;letter-spacing:-0.15px">Explore guides on important civic topics</div>
   <!-- info box -->
   <div class="a" style="left:12px;top:84px;width:329px;height:73px;background:#eef5fd;border-left:3px solid #3c4670;border-radius:7px 4px 4px 7px"></div>
   <div class="a" style="left:27px;top:97px;width:13px;height:13px;background:#7ab3d6;border-radius:2px;color:#fff;font-size:10px;font-weight:bold;text-align:center;line-height:13px">i</div>
   <div class="a" style="left:42px;top:96px;font-size:12px;font-weight:bold;color:#2e3a78;white-space:nowrap;letter-spacing:-0.2px">About These Modules</div>
   <div class="a" style="left:26px;top:116px;font-size:10.9px;color:#3c4047;white-space:nowrap;line-height:17px;letter-spacing:-0.1px">Learn about essential government documents and citizen rights.<br>Each module has detailed information and examples.</div>
   <div class="a card" style="top:176px"></div>
   <svg style="left:26px;top:196px" width="32" height="30" viewBox="0 0 32 30"><path d="M2 8 L16 2 L30 8 L16 14 Z" fill="#4aa0e6"/><path d="M2 8 L16 14 V29 L2 23 Z" fill="#1f6fd1"/><path d="M16 14 L30 8 V23 L16 29 Z" fill="#1a56b0"/><path d="M11 7 L18 4 L21 6 L14 9 Z" fill="#ffffff"/></svg>
   <div class="a ct" style="top:195px">Voting Rights</div>
   <div class="a cs" style="top:216px">Learn about your right to vote</div>
   <svg style="left:323px;top:207px" width="7" height="11" viewBox="0 0 7 11"><path d="M1.5 1.5 L5.5 5.5 L1.5 9.5" stroke="#2b3550" stroke-width="2" fill="none"/></svg>
   <div class="a card" style="top:257px"></div>
   <div class="a" style="left:25px;top:277px;width:33px;height:31px;background:#9b3dc6;color:#fff;font-size:19px;font-weight:bold;line-height:31px;text-align:center;letter-spacing:-0.5px">ID</div>
   <div class="a ct" style="top:276px">Aadhaar</div>
   <div class="a cs" style="top:297px">Digital identity essentials</div>
   <svg style="left:323px;top:288px" width="7" height="11" viewBox="0 0 7 11"><path d="M1.5 1.5 L5.5 5.5 L1.5 9.5" stroke="#2b3550" stroke-width="2" fill="none"/></svg>
   <div class="a card" style="top:338px"></div>
   <svg style="left:28px;top:358px" width="28" height="32" viewBox="0 0 28 32"><rect x="3" y="4" width="22" height="27" rx="2" fill="#f3ece2" stroke="#d2884a" stroke-width="2.2"/><rect x="9" y="1" width="10" height="6" rx="1.5" fill="#9fb3c4"/><path d="M8 14H20M8 18H20M8 22H20" stroke="#d8d2cc" stroke-width="1.4"/></svg>
   <div class="a ct" style="top:357px">PAN Card</div>
   <div class="a cs" style="top:378px">Tax identification guide</div>
   <svg style="left:323px;top:369px" width="7" height="11" viewBox="0 0 7 11"><path d="M1.5 1.5 L5.5 5.5 L1.5 9.5" stroke="#2b3550" stroke-width="2" fill="none"/></svg>
   <div class="a card" style="top:418px"></div>
   <svg style="left:25px;top:438px" width="33" height="31" viewBox="0 0 33 31"><path d="M16.5 1 L31 8 H2 Z" fill="#8aa3b8"/><rect x="3" y="8" width="27" height="3" fill="#9fb4c6"/><rect x="5" y="12" width="4" height="14" fill="#6f879b"/><rect x="11.5" y="12" width="4" height="14" fill="#6f879b"/><rect x="18" y="12" width="4" height="14" fill="#6f879b"/><rect x="24.5" y="12" width="4" height="14" fill="#6f879b"/><rect x="2" y="26" width="29" height="4" fill="#8aa3b8"/></svg>
   <div class="a ct" style="top:437px">Citizenship</div>
   <div class="a cs" style="top:458px">Rights and responsibilities</div>
   <svg style="left:323px;top:449px" width="7" height="11" viewBox="0 0 7 11"><path d="M1.5 1.5 L5.5 5.5 L1.5 9.5" stroke="#2b3550" stroke-width="2" fill="none"/></svg>
   <div class="a card" style="top:499px"></div>
   <svg style="left:29px;top:519px" width="26" height="31" viewBox="0 0 26 31"><rect x="1" y="1" width="24" height="29" rx="1" fill="#e8372e"/><rect x="1" y="1" width="6" height="29" fill="#5a3434"/></svg>
   <div class="a ct" style="top:518px">Passport</div>
   <div class="a cs" style="top:539px">Travel documentation guide</div>
   <svg style="left:323px;top:530px" width="7" height="11" viewBox="0 0 7 11"><path d="M1.5 1.5 L5.5 5.5 L1.5 9.5" stroke="#2b3550" stroke-width="2" fill="none"/></svg>
   <svg style="left:59px;top:218px" width="12" height="18" viewBox="0 0 12 18"><path d="M1 1 V15 L4.5 11.5 L7 17 L9 16 L6.5 10.5 H11 Z" fill="#fff" stroke="#333" stroke-width="1.1" stroke-linejoin="round"/></svg>
   <!-- bottom nav -->
   <div class="a" style="left:0;top:735px;width:356px;height:2px;background:#e3e5e8"></div>
   <svg style="left:30px;top:756px" width="10" height="17" viewBox="0 0 10 17"><path d="M1 1 H9 M1 16 H9 M1.5 1 L8.5 16 M8.5 1 L1.5 16 M1 1 V5 M9 1 V5 M1 16 V12 M9 16 V12" stroke="#c4c7cc" stroke-width="1.3" fill="none"/></svg>
   <svg style="left:101px;top:756px" width="10" height="17" viewBox="0 0 10 17"><path d="M1 1 H9 M1 16 H9 M1.5 1 L8.5 16 M8.5 1 L1.5 16 M1 1 V5 M9 1 V5 M1 16 V12 M9 16 V12" stroke="#c4c7cc" stroke-width="1.3" fill="none"/></svg>
   <svg style="left:172px;top:756px" width="10" height="17" viewBox="0 0 10 17"><path d="M1 1 H9 M1 16 H9 M1.5 1 L8.5 16 M8.5 1 L1.5 16 M1 1 V5 M9 1 V5 M1 16 V12 M9 16 V12" stroke="#4a5ea8" stroke-width="1.3" fill="none"/></svg>
   <svg style="left:244px;top:756px" width="10" height="17" viewBox="0 0 10 17"><path d="M1 1 H9 M1 16 H9 M1.5 1 L8.5 16 M8.5 1 L1.5 16 M1 1 V5 M9 1 V5 M1 16 V12 M9 16 V12" stroke="#c4c7cc" stroke-width="1.3" fill="none"/></svg>
   <svg style="left:315px;top:756px" width="10" height="17" viewBox="0 0 10 17"><path d="M1 1 H9 M1 16 H9 M1.5 1 L8.5 16 M8.5 1 L1.5 16 M1 1 V5 M9 1 V5 M1 16 V12 M9 16 V12" stroke="#c4c7cc" stroke-width="1.3" fill="none"/></svg>

  </div>
  <!-- zoom controls -->
  <div class="a" style="left:829px;top:747px;width:33px;height:170px;border:1px solid #34363a;border-radius:6px"></div>
  <svg style="left:837px;top:754px" width="16" height="16" viewBox="0 0 16 16"><path d="M8 1V15M1 8H15" stroke="#c9ccd3" stroke-width="1.6"/></svg>
  <div class="a" style="left:838px;top:789px;width:14px;height:2px;background:#5d6066"></div>
  <div class="a" style="left:836px;top:810px;font-size:11.5px;font-weight:bold;color:#d0d3d9;letter-spacing:-0.5px">1:1</div>
  <svg style="left:837px;top:838px" width="16" height="16" viewBox="0 0 16 16"><rect x="1.5" y="1.5" width="13" height="13" rx="2" stroke="#4a4d52" stroke-width="1.5" fill="none"/><path d="M5 11L11 5" stroke="#4a4d52" stroke-width="1.5"/></svg>
 </div>

 <div class="a" style="left:1549px;top:41px;width:44px;height:857px;background:#2b2d30;border-left:1px solid #28292c">
  <svg style="left:12px;top:12px" width="22" height="22" viewBox="0 0 22 22"><g stroke="#c9ccd3" stroke-width="1.6" fill="none"><path d="M4 16 C5 14 5 12 5 9 A5.5 5.5 0 0 1 16 9 C16 12 16 14 17 16 Z"/><path d="M9 18.5 H12"/></g><circle cx="16.5" cy="4.5" r="3.3" fill="#3574f0"/></svg>
  <svg style="left:11px;top:55px" width="22" height="19" viewBox="0 0 22 19"><g stroke="#c9ccd3" stroke-width="1.6" fill="none"><path d="M2 16 C1 12 4 7 10 6 C15 5 18 5 20 2 C21 7 18 13 12 15 C8 16 4 17 2 16 Z"/><path d="M8 11 C10 9 13 9 15 10"/></g></svg>
  <svg style="left:12px;top:96px" width="21" height="20" viewBox="0 0 21 20"><g stroke="#c9ccd3" stroke-width="1.6" fill="none"><path d="M9 17 H3.5 A1.5 1.5 0 0 1 2 15.5 V3 A1.5 1.5 0 0 1 3.5 1.5 H9 A1.5 1.5 0 0 1 10.5 3 V10"/><path d="M10 18 C10 14 12 12 15 12 C18 12 20 14 20 18 Z"/><path d="M5 4H7"/></g></svg>
  <div class="a" style="left:6px;top:133px;width:31px;height:31px;border-radius:6px;background:#3574f0"></div>
  <svg style="left:12px;top:138px" width="20" height="21" viewBox="0 0 20 21"><g stroke="#eaf0ff" stroke-width="1.6" fill="none"><path d="M8 18 H3.5 A1.5 1.5 0 0 1 2 16.5 V3.5 A1.5 1.5 0 0 1 3.5 2 H7"/><rect x="6" y="9" width="11" height="6" rx="2"/><path d="M7 18 H17"/></g><circle cx="15" cy="5" r="2.5" fill="#53c45e"/></svg>
  <svg style="left:13px;top:181px" width="18" height="18" viewBox="0 0 18 18"><path d="M9 0 C9.5 6 12 8.5 18 9 C12 9.5 9.5 12 9 18 C8.5 12 6 9.5 0 9 C6 8.5 8.5 6 9 0 Z" fill="#dfe2e8"/></svg>
 </div>

 <div class="a" style="left:0;top:898px;width:1593px;height:56px;background:#2b2e36"></div>
</div>
<!-- title bar controls -->
<div class="a" style="left:1771px;top:19px;width:12px;height:1px;background:#ffffff"></div>
<svg style="left:1827px;top:12px" width="14" height="14" viewBox="0 0 14 14"><rect x="1" y="4" width="9" height="9" rx="1.5" stroke="#fff" stroke-width="1" fill="none"/><path d="M3.5 2.5 A1.5 1.5 0 0 1 5 1 H11 A2 2 0 0 1 13 3 V9 A1.5 1.5 0 0 1 11.5 10.5" stroke="#cfcfcf" stroke-width="1" fill="none"/></svg>
<svg style="left:1884px;top:12px" width="14" height="14" viewBox="0 0 14 14"><path d="M1 1L13 13M13 1L1 13" stroke="#fff" stroke-width="1.1"/></svg>
<!-- viewer icons -->
<svg style="left:30px;top:63px" width="16" height="14" viewBox="0 0 16 14"><path d="M7.5 0.7 L1 7 L7.5 13.3" stroke="#f2f2f2" stroke-width="1.2" fill="none"/><path d="M1 7 H15.3" stroke="#bdbdbd" stroke-width="1.6"/></svg>
<svg style="left:1775px;top:59px" width="22" height="22" viewBox="0 0 22 22"><path d="M11 1.5 L13.8 7.6 L20.4 8.3 L15.4 12.7 L16.8 19.3 L11 16 L5.2 19.3 L6.6 12.7 L1.6 8.3 L8.2 7.6 Z" stroke="#fff" stroke-width="1.3" fill="none" stroke-linejoin="round"/></svg>
<svg style="left:1825px;top:59px" width="22" height="22" viewBox="0 0 22 22"><circle cx="11" cy="11" r="9.6" stroke="#fff" stroke-width="1.3" fill="none"/><circle cx="7.8" cy="8.5" r="1.2" fill="#fff"/><circle cx="14.2" cy="8.5" r="1.2" fill="#fff"/><path d="M6.3 13 C8.5 15.3 13.5 15.3 15.7 13" stroke="#fff" stroke-width="1.3" fill="none"/></svg>
<svg style="left:1877px;top:68px" width="18" height="4" viewBox="0 0 18 4"><g fill="#fff"><circle cx="2" cy="2" r="1.8"/><circle cx="8.3" cy="2" r="1.8"/><circle cx="14.6" cy="2" r="1.8"/></g></svg>
<svg style="left:34px;top:577px" width="12" height="17" viewBox="0 0 12 17"><path d="M9.5 1.5 L2 8.5 L9.5 15.5" stroke="#fff" stroke-width="2" fill="none" stroke-linecap="round"/></svg>
<svg style="left:1876px;top:577px" width="12" height="17" viewBox="0 0 12 17"><path d="M2.5 1.5 L10 8.5 L2.5 15.5" stroke="#fff" stroke-width="2" fill="none" stroke-linecap="round"/></svg>
<div id="ctrl" class="a">
 <svg style="left:20px;top:15px" width="20" height="20" viewBox="0 0 20 20"><path d="M2.5 1.5 C2.5 0.8 3.2 0.4 3.8 0.8 L18 9.2 C18.6 9.6 18.6 10.4 18 10.8 L3.8 19.2 C3.2 19.6 2.5 19.2 2.5 18.5 Z" fill="#fff"/></svg>
 <div class="a" style="left:81px;top:16px;font-size:15.5px;color:#fff;letter-spacing:-0.4px">0:33</div>
 <div class="a" style="left:146px;top:23px;width:660px;height:5px;border-radius:2.5px;background:#1fad60"></div>
 <div class="a" style="left:810px;top:23px;width:718px;height:5px;border-radius:2.5px;background:#a0a0a0"></div>
 <div class="a" style="left:792px;top:13px;width:26px;height:26px;border-radius:50%;background:#444444"></div>
 <div class="a" style="left:798px;top:19px;width:13px;height:13px;border-radius:50%;background:#1fad60"></div>
 <div class="a" style="left:1563px;top:16px;font-size:15.5px;color:#fff;letter-spacing:-0.4px">0:36</div>
 <svg style="left:1633px;top:15px" width="22" height="21" viewBox="0 0 22 21"><g stroke="#fff" stroke-width="1.3" fill="none"><path d="M1 7 H4.5 L9.5 2.5 V17 L4.5 13 H1 Z"/><path d="M12.5 7.5 C13.5 9 13.5 11 12.5 12.5"/><path d="M15 5 C17 8 17 12 15 15"/><path d="M17.5 2.5 C21 7 21 13 17.5 18"/></g></svg>
</div>

<div id="thumbs" class="a">
<div class="a th" style="left:-43px;background:#1e242c;"><div class="a" style="left:0;top:14px;width:60px;height:8px;background:#2a3038"></div><div class="a" style="left:0;top:22px;width:60px;height:38px;background:#1c2630"></div></div>
<div class="a th" style="left:23px;background:#adadad;"><div class="a" style="left:3px;top:3px;width:52px;height:1.1px;background:#8a8a8a"></div><div class="a" style="left:3px;top:9px;width:50px;height:1.1px;background:#8a8a8a"></div><div class="a" style="left:3px;top:12px;width:40px;height:1.1px;background:#8a8a8a"></div><div class="a" style="left:3px;top:17px;width:52px;height:1.1px;background:#8a8a8a"></div><div class="a" style="left:3px;top:20px;width:50px;height:1.1px;background:#8a8a8a"></div><div class="a" style="left:3px;top:25px;width:52px;height:1.1px;background:#8a8a8a"></div><div class="a" style="left:3px;top:28px;width:52px;height:1.1px;background:#8a8a8a"></div><div class="a" style="left:3px;top:31px;width:46px;height:1.1px;background:#8a8a8a"></div><div class="a" style="left:3px;top:36px;width:20px;height:1.1px;background:#8a8a8a"></div><div class="a" style="left:3px;top:40px;width:45px;height:1.1px;background:#8a8a8a"></div><div class="a" style="left:3px;top:44px;width:50px;height:1.1px;background:#8a8a8a"></div><div class="a" style="left:3px;top:48px;width:50px;height:1.1px;background:#8a8a8a"></div><div class="a" style="left:3px;top:52px;width:50px;height:1.1px;background:#8a8a8a"></div><div class="a" style="left:3px;top:56px;width:48px;height:1.1px;background:#8a8a8a"></div></div>
<div class="a th" style="left:88px;background:#232323;"><div class="a" style="left:28px;top:11px;width:25px;height:1px;background:#3c3c3c"></div><div class="a" style="left:28px;top:14px;width:25px;height:1px;background:#3c3c3c"></div><div class="a" style="left:28px;top:20px;width:30px;height:1px;background:#3c3c3c"></div><div class="a" style="left:28px;top:24px;width:30px;height:1px;background:#3c3c3c"></div><div class="a" style="left:28px;top:28px;width:30px;height:1px;background:#3c3c3c"></div><div class="a" style="left:28px;top:32px;width:30px;height:1px;background:#3c3c3c"></div><div class="a" style="left:28px;top:36px;width:30px;height:1px;background:#3c3c3c"></div><div class="a" style="left:28px;top:53px;width:30px;height:4px;background:#303030"></div></div>
<div class="a th" style="left:153px;background:#141414;"><div class="a" style="left:6px;top:4px;width:10px;height:1.1px;background:#5a5a5a"></div><div class="a" style="left:6px;top:20px;width:48px;height:1.1px;background:#5a5a5a"></div><div class="a" style="left:6px;top:23px;width:45px;height:1.1px;background:#5a5a5a"></div><div class="a" style="left:6px;top:29px;width:45px;height:1.1px;background:#5a5a5a"></div><div class="a" style="left:6px;top:34px;width:44px;height:1.1px;background:#5a5a5a"></div><div class="a" style="left:6px;top:38px;width:48px;height:1.1px;background:#5a5a5a"></div><div class="a" style="left:6px;top:41px;width:30px;height:1.1px;background:#5a5a5a"></div><div class="a" style="left:6px;top:47px;width:44px;height:1.1px;background:#5a5a5a"></div><div class="a" style="left:6px;top:50px;width:30px;height:1.1px;background:#5a5a5a"></div><div class="a" style="left:6px;top:57px;width:35px;height:1.1px;background:#5a5a5a"></div></div>
<div class="a th" style="left:218px;background:#adadad;"><div class="a" style="left:0;top:3px;width:60px;height:11px;background:#1c6aa0"></div><div class="a" style="left:0;top:14px;width:60px;height:15px;background:#b7b7b7"></div><div class="a" style="left:0;top:29px;width:50px;height:12px;background:#1d7fa6"></div><div class="a" style="left:52px;top:29px;width:8px;height:12px;background:#b38a22"></div><div class="a" style="left:0;top:42px;width:50px;height:12px;background:#1d7fa6"></div><div class="a" style="left:52px;top:42px;width:8px;height:12px;background:#b38a22"></div><div class="a" style="left:0;top:54px;width:60px;height:6px;background:#a8a8a8"></div></div>
<div class="a th" style="left:283px;background:#b3b3b3;"><div class="a" style="left:0;top:0;width:60px;height:3px;background:#1c1c1c"></div><div class="a" style="left:6px;top:14px;width:20px;height:1.5px;background:#8a8a8a"></div><div class="a" style="left:6px;top:19px;width:50px;height:1.5px;background:#8a8a8a"></div><div class="a" style="left:52px;top:20px;width:8px;height:8px;border-radius:50%;background:#2a8aa0"></div><div class="a" style="left:4px;top:6px;width:7px;height:7px;border-radius:50%;background:#3a9ab0"></div></div>
<div class="a th" style="left:348px;background:#b2b2b2;"><div class="a" style="left:16px;top:9px;width:27px;height:27px;border-radius:50%;background:radial-gradient(circle,#6a8eb0 0%,#3e6a96 60%,#8a7a50 100%)"></div><div class="a" style="left:0;top:37px;width:60px;text-align:center;font-size:7px;font-weight:bold;color:#34507a">CivilSphere</div></div>
<div class="a th" style="left:413px;background:#b2b2b2;"><svg style="left:19px;top:9px" width="22" height="26" viewBox="0 0 22 26"><path d="M11 1 L20 20 L11 25 L2 20 Z" fill="none" stroke="#a4782c" stroke-width="2"/><path d="M11 4 L11 22" stroke="#3c6c9e" stroke-width="3"/><circle cx="11" cy="14" r="4" fill="#6a8eaa"/></svg><div class="a" style="left:0;top:37px;width:60px;text-align:center;font-size:7px;font-weight:bold;color:#34507a">CivilSphere</div></div>
<div class="a th" style="left:478px;background:#1c1d20;"><div class="a" style="left:12px;top:8px;width:30px;height:1px;background:#34363a"></div><div class="a" style="left:12px;top:14px;width:30px;height:1px;background:#34363a"></div><div class="a" style="left:12px;top:20px;width:30px;height:1px;background:#34363a"></div><div class="a" style="left:12px;top:26px;width:30px;height:1px;background:#34363a"></div><div class="a" style="left:12px;top:32px;width:30px;height:1px;background:#34363a"></div><div class="a" style="left:12px;top:38px;width:30px;height:1px;background:#34363a"></div><div class="a" style="left:12px;top:44px;width:30px;height:1px;background:#34363a"></div></div>
<div class="a th" style="left:543px;background:#b0b0b0;"><div class="a" style="left:0;top:0;width:60px;height:3px;background:#222"></div><div class="a" style="left:14px;top:9px;width:14px;height:1px;background:#969696"></div><div class="a" style="left:14px;top:16px;width:44px;height:1px;background:#969696"></div><div class="a" style="left:14px;top:18px;width:40px;height:1px;background:#969696"></div><div class="a" style="left:14px;top:30px;width:44px;height:1px;background:#969696"></div><div class="a" style="left:14px;top:34px;width:36px;height:1px;background:#969696"></div><div class="a" style="left:14px;top:38px;width:36px;height:1px;background:#969696"></div><div class="a" style="left:14px;top:42px;width:36px;height:1px;background:#969696"></div><div class="a" style="left:14px;top:46px;width:30px;height:1px;background:#969696"></div><div class="a" style="left:14px;top:52px;width:26px;height:1px;background:#969696"></div></div>
<div class="a th" style="left:608px;background:#1c2a44;"><div class="a" style="left:0;top:0;width:60px;height:26px;background:#1c2a44"></div><div class="a" style="left:8px;top:6px;width:30px;height:1.3px;background:#3a6aa8"></div><div class="a" style="left:8px;top:10px;width:20px;height:1.3px;background:#3a6aa8"></div><div class="a" style="left:8px;top:15px;width:34px;height:1.3px;background:#3a6aa8"></div><div class="a" style="left:0;top:26px;width:60px;height:34px;background:linear-gradient(180deg,#9a4a24 0%,#a8582a 40%,#8a6a3a 70%,#6a5a3a 100%)"></div><div class="a" style="left:0;top:29px;width:60px;text-align:center;font-size:7px;font-weight:bold;color:#d8c8b8">Domino's</div><div class="a" style="left:12px;top:40px;width:36px;height:24px;border-radius:50%;background:#8a7040"></div></div>
<div class="a th" style="left:673px;background:#1c2a44;"><div class="a" style="left:0;top:0;width:60px;height:26px;background:#1c2a44"></div><div class="a" style="left:8px;top:6px;width:30px;height:1.3px;background:#3a6aa8"></div><div class="a" style="left:8px;top:10px;width:20px;height:1.3px;background:#3a6aa8"></div><div class="a" style="left:8px;top:15px;width:34px;height:1.3px;background:#3a6aa8"></div><div class="a" style="left:0;top:26px;width:60px;height:34px;background:linear-gradient(180deg,#9a4a24 0%,#a8582a 40%,#8a6a3a 70%,#6a5a3a 100%)"></div><div class="a" style="left:0;top:29px;width:60px;text-align:center;font-size:7px;font-weight:bold;color:#d8c8b8">Domino's</div><div class="a" style="left:12px;top:40px;width:36px;height:24px;border-radius:50%;background:#8a7040"></div></div>
<div class="a th" style="left:738px;background:#b2b2b2;"><div class="a" style="left:18px;top:11px;width:25px;height:25px;border-radius:50%;background:radial-gradient(circle,#6a8eb0 0%,#3e6a96 60%,#8a7a50 100%)"></div><div class="a" style="left:0;top:37px;width:60px;text-align:center;font-size:7px;font-weight:bold;color:#34507a">CivilSense</div></div>
<div class="a th" style="left:803px;background:#afb2b3;"><svg style="left:14px;top:4px" width="32" height="36" viewBox="0 0 32 36"><path d="M4 12 C2 26 14 34 16 34 C14 28 8 24 8 14 Z" fill="#1a6a8a"/><path d="M28 12 C30 26 18 34 16 34 C18 28 24 24 24 14 Z" fill="#2a8aa8"/><circle cx="14" cy="6" r="4" fill="#2a8aa8"/><path d="M10 12 C12 22 18 26 22 20 C20 16 16 14 10 12 Z" fill="#1a6a8a"/><circle cx="22" cy="10" r="3" fill="#1a5a7a"/></svg><div class="a" style="left:6px;top:41px;font-size:8.5px;font-weight:bold;color:#1f6a88;letter-spacing:1.5px;white-space:nowrap">CIVISENS</div></div>
<div class="a th" style="left:868px;background:#b2b2b2;"><svg style="left:20px;top:9px" width="20" height="24" viewBox="0 0 20 24"><path d="M10 1 L18 18 L10 23 L2 18 Z" fill="none" stroke="#a4782c" stroke-width="2"/><path d="M10 4 L10 20" stroke="#3c6c9e" stroke-width="3"/></svg><div class="a" style="left:0;top:33px;width:60px;text-align:center;font-size:7px;font-weight:bold;color:#34507a">CivilSense</div></div>
<div class="a" style="left:933px;top:0;width:60px;height:60px;border:3px solid #1ec25e;border-radius:6px;background:#1e1f22;overflow:hidden"><div class="a" style="left:0;top:0;width:6px;height:54px;background:#2b2d30"></div><div class="a" style="left:38px;top:0;width:16px;height:54px;background:#2b2d30"></div><div class="a" style="left:12px;top:4px;width:20px;height:1px;background:#4a4650"></div><div class="a" style="left:12px;top:9px;width:20px;height:1px;background:#4a4650"></div><div class="a" style="left:12px;top:14px;width:22px;height:1px;background:#4a4650"></div><div class="a" style="left:12px;top:19px;width:22px;height:1px;background:#4a4650"></div><div class="a" style="left:12px;top:24px;width:16px;height:1px;background:#4a4650"></div><div class="a" style="left:12px;top:30px;width:24px;height:1px;background:#4a4650"></div><div class="a" style="left:12px;top:36px;width:18px;height:1px;background:#4a4650"></div><div class="a" style="left:12px;top:42px;width:22px;height:1px;background:#4a4650"></div></div>
<div class="a th" style="left:998px;background:#b4bdc2;"><div class="a" style="left:4px;top:2px;width:10px;height:4px;background:#3a8ab0"></div><div class="a" style="left:33px;top:2px;width:7px;height:3px;background:#2a8ac0"></div><div class="a" style="left:4px;top:14px;font-size:6px;font-weight:bold;color:#222;white-space:nowrap;line-height:7px">Your Smart <span style="color:#2a8ab0">Civic</span><br><span style="color:#2a8ab0">Companion</span></div><div class="a" style="left:4px;top:31px;width:14px;height:3px;background:#2a8ab0"></div></div>
<div class="a th" style="left:1063px;background:#1c1d1f;"><div class="a" style="left:22px;top:4px;width:50px;height:1px;background:#3e3e3e"></div><div class="a" style="left:22px;top:8px;width:50px;height:1px;background:#3e3e3e"></div><div class="a" style="left:22px;top:14px;width:20px;height:1px;background:#3e3e3e"></div><div class="a" style="left:22px;top:20px;width:26px;height:1px;background:#3e3e3e"></div><div class="a" style="left:22px;top:26px;width:20px;height:1px;background:#3e3e3e"></div><div class="a" style="left:22px;top:34px;width:26px;height:1px;background:#3e3e3e"></div><div class="a" style="left:22px;top:40px;width:30px;height:1px;background:#3e3e3e"></div><div class="a" style="left:22px;top:46px;width:30px;height:1px;background:#3e3e3e"></div></div>
<div class="a badge" style="left:293px;background:#5e5e5e">0:36</div>
<div class="a badge" style="left:489px;background:transparent">2:27</div>
<div class="a badge" style="left:946px;background:#1c1c1c">1:10</div>
<div class="a badge" style="left:1012px;background:#5e5e5e">0:47</div>
</div>
<div id="task" class="a">
 <!-- widgets -->
 <svg style="left:29px;top:13px" width="26" height="32" viewBox="0 0 26 32"><path d="M4 1 L21 6 V27 L4 31 Z" fill="#e89a18"/><path d="M0 11.5H25M0 17.5H25M0 23.5H25" stroke="#f6c23a" stroke-width="2.6"/><path d="M7 9 C12 10 17 11 21 13 M7 15 C12 16 17 17 21 19 M7 21 C12 22 17 23 21 25" stroke="#c87a10" stroke-width="1.6" fill="none"/></svg>
 <div class="a" style="left:40px;top:7px;width:20px;height:20px;border-radius:50%;background:#f79aa8;color:#111;font-size:13.5px;line-height:20px;text-align:center;letter-spacing:-0.3px">9+</div>
 <!-- start -->
 <svg style="left:413px;top:15px" width="29" height="29" viewBox="0 0 29 29"><defs><linearGradient id="wg" x1="0" y1="0" x2="1" y2="1"><stop offset="0" stop-color="#62d3ff"/><stop offset="1" stop-color="#1a8fe6"/></linearGradient></defs><rect x="0" y="0" width="13.8" height="13.8" rx="1.5" fill="url(#wg)"/><rect x="15.2" y="0" width="13.8" height="13.8" rx="1.5" fill="url(#wg)"/><rect x="0" y="15.2" width="13.8" height="13.8" rx="1.5" fill="url(#wg)"/><rect x="15.2" y="15.2" width="13.8" height="13.8" rx="1.5" fill="url(#wg)"/></svg>
 <!-- search -->
 <svg style="left:470px;top:16px" width="28" height="28" viewBox="0 0 28 28"><circle cx="11.5" cy="11.5" r="9" stroke="#e8e8e8" stroke-width="3" fill="none"/><path d="M18.5 18.5 L26 26" stroke="#d0d0d0" stroke-width="3.2" stroke-linecap="round"/></svg>
 <!-- task view -->
 <div class="a" style="left:524px;top:27px;width:19px;height:19px;border-radius:2px;background:#6a6a6a"></div>
 <div class="a" style="left:535px;top:16px;width:19px;height:19px;border-radius:2px;background:#e8e8e8;opacity:.95"></div>
 <div class="a" style="left:535px;top:27px;width:8px;height:8px;background:#a8a8a8"></div>
 <!-- whatsapp -->
 <div class="a" style="left:569px;top:5px;width:50px;height:49px;border-radius:5px;background:#2b2b2b;border:1px solid #333"></div>
 <svg style="left:578px;top:15px" width="32" height="32" viewBox="0 0 32 32"><path d="M16 3 A12.5 12.5 0 1 1 9 26 L3 28.5 L5.5 22.5 A12.5 12.5 0 0 1 16 3 Z" stroke="#25d366" stroke-width="2.6" fill="none"/><path d="M11 10 C10 12 11 16 14 19 C17 22 20 23 22 22 L22.5 19.5 L19.5 18 L18 19.5 C16 18.5 14 16.5 13 14.5 L14.5 13 L13 10 Z" fill="#25d366"/></svg>
 <div class="a" style="left:592px;top:9px;width:26px;height:20px;border-radius:10px;background:#4cc2ff;color:#111;font-size:13px;line-height:20px;text-align:center">82</div>
 <div class="a" style="left:584px;top:49px;width:20px;height:3px;border-radius:2px;background:#4cc2ff"></div>
 <!-- copilot -->
 <svg style="left:634px;top:15px" width="30" height="28" viewBox="0 0 30 28"><defs><linearGradient id="cpa" x1="0" y1="0" x2="0.3" y2="1"><stop offset="0" stop-color="#1aa0f0"/><stop offset=".5" stop-color="#48c060"/><stop offset="1" stop-color="#f8c820"/></linearGradient><linearGradient id="cpb" x1="0" y1="0" x2="0.3" y2="1"><stop offset="0" stop-color="#9a50f0"/><stop offset=".6" stop-color="#e050a0"/><stop offset="1" stop-color="#f88050"/></linearGradient></defs><path d="M8 3 C9 1 10 1 12 1 H17 C19 1 19 3 18 5 L11 23 C10 25 9 26 7 26 H4 C1.5 26 0.5 24 1.5 21.5 Z" fill="url(#cpa)"/><path d="M22 2 C24 2 26 2 27 4 C29 8 28.5 20 25 24 C24 26 22 27 20 27 H13 C11 27 11 25 12 23 L19 5 C20 3 21 2 22 2 Z" fill="url(#cpb)"/><path d="M12 23 C11 25 11 27 13 27 H18 C16 27 14.5 26 14 24 Z" fill="#f04a30"/></svg>
 <!-- explorer -->
 <svg style="left:688px;top:17px" width="31" height="26" viewBox="0 0 31 26"><path d="M0 3 A2 2 0 0 1 2 1 H11 L14 4 H29 A2 2 0 0 1 31 6 V24 A2 2 0 0 1 29 26 H2 A2 2 0 0 1 0 24 Z" fill="#f0c040"/><path d="M0 8 H31 V24 A2 2 0 0 1 29 26 H2 A2 2 0 0 1 0 24 Z" fill="#ffd24a"/><rect x="7" y="18" width="17" height="8" rx="1" fill="#1f7ad6"/><rect x="10" y="20" width="11" height="1.5" fill="#8ac4ff"/></svg>
 <div class="a" style="left:697px;top:49px;width:11px;height:3px;border-radius:2px;background:#8a8a8a"></div>
 <!-- edge -->
 <svg style="left:743px;top:13px" width="32" height="32" viewBox="0 0 32 32"><defs><linearGradient id="eg1" x1="0" y1="0" x2="1" y2="0.6"><stop offset="0" stop-color="#1b9de2"/><stop offset=".6" stop-color="#2fc3c8"/><stop offset="1" stop-color="#5ad86a"/></linearGradient><linearGradient id="eg2" x1="0" y1="0" x2="1" y2="1"><stop offset="0" stop-color="#0d6ac0"/><stop offset="1" stop-color="#1a3f8f"/></linearGradient></defs><circle cx="16" cy="16" r="15" fill="url(#eg1)"/><path d="M1.5 18 C1 10 8 6 14 7 C20 8 24 12 23 17 C22 21 18 22 15 20 C12 18 13 14 15 13 C10 13 6 18 8 23 C10 28 16 31 20 30.5 C12 32 2 27 1.5 18 Z" fill="url(#eg2)"/><path d="M15 13 C12 14 12 18 15 20 C18 22 22 21 23 17 C22 20 18 21 16 19 C14 17 14 14 15 13 Z" fill="#1c1c1c"/></svg>
 <!-- A -->
 <div class="a" style="left:798px;top:15px;width:31px;height:30px;background:linear-gradient(135deg,#1a6ae0,#0a50c8)"></div>
 <svg style="left:801px;top:20px" width="25" height="20" viewBox="0 0 25 20"><path d="M2 19 L12 1 M7 19 L17 1 M17 19 L21 8 L23 19" stroke="#e8f0ff" stroke-width="2.6" fill="none"/></svg>
 <!-- chrome -->
 <svg style="left:854px;top:15px" width="30" height="30" viewBox="0 0 30 30"><circle cx="15" cy="15" r="14.5" fill="#ea4335"/><path d="M15 15 L27.6 7.8 A14.5 14.5 0 0 1 15 29.5 Z" fill="#fbbc04"/><path d="M15 15 L15 29.5 A14.5 14.5 0 0 1 2.4 7.8 Z" fill="#34a853"/><circle cx="15" cy="15" r="6.5" fill="#fff"/><circle cx="15" cy="15" r="5" fill="#1a73e8"/></svg>
 <div class="a" style="left:871px;top:9px;width:20px;height:20px;border-radius:50%;background:#7a5ac8;color:#f0e8ff;font-size:11px;line-height:20px;text-align:center">K</div>
 <div class="a" style="left:863px;top:49px;width:11px;height:3px;border-radius:2px;background:#8a8a8a"></div>
 <!-- android studio -->
 <svg style="left:909px;top:15px" width="30" height="30" viewBox="0 0 30 30"><path d="M15 1 L18 3.5 L22 3 L23.5 6.5 L27 8 L26.5 12 L29 15 L26.5 18 L27 22 L23.5 23.5 L22 27 L18 26.5 L15 29 L12 26.5 L8 27 L6.5 23.5 L3 22 L3.5 18 L1 15 L3.5 12 L3 8 L6.5 6.5 L8 3 L12 3.5 Z" fill="#f4f6f8"/><path d="M9 24 L15 7 L21 24 M11 17 H19" stroke="#2a7ae0" stroke-width="2.2" fill="none"/><circle cx="15" cy="8" r="2" fill="#2a7ae0"/><path d="M19 13 L23 14 L20 17Z" fill="#3dba5a"/></svg>
 <div class="a" style="left:918px;top:49px;width:11px;height:3px;border-radius:2px;background:#8a8a8a"></div>
 <!-- youtube -->
 <div class="a" style="left:963px;top:19px;width:31px;height:22px;border-radius:6px;background:#f01830"></div>
 <svg style="left:973px;top:24px" width="11" height="12" viewBox="0 0 11 12"><path d="M1 1 L10 6 L1 11 Z" fill="#fff"/></svg>
 <!-- spotify -->
 <svg style="left:1019px;top:16px" width="29" height="29" viewBox="0 0 29 29"><circle cx="14.5" cy="14.5" r="14" fill="#1ed760"/><path d="M6.5 10 C11 8.5 18 8.5 22.5 11 M7.5 14.5 C11.5 13 17 13.5 21 15.5 M8.5 19 C12 18 16 18.5 19 20" stroke="#121212" stroke-width="2.4" fill="none" stroke-linecap="round"/></svg>
 <!-- classroom -->
 <div class="a" style="left:1075px;top:18px;width:28px;height:24px;background:#1e8e3e;border:3px solid #f4b400"></div>
 <svg style="left:1081px;top:22px" width="16" height="14" viewBox="0 0 16 14"><circle cx="8" cy="5" r="2.3" fill="#fff"/><circle cx="3" cy="6.5" r="1.7" fill="#cfe8d4"/><circle cx="13" cy="6.5" r="1.7" fill="#cfe8d4"/><path d="M4 11 C5 8.5 11 8.5 12 11 Z" fill="#fff"/><rect x="10" y="12" width="5" height="1.5" fill="#fff"/></svg>
 <!-- linkedin -->
 <div class="a" style="left:1131px;top:17px;width:27px;height:26px;border-radius:2px;background:#0a66c2;color:#fff;font-size:21px;font-weight:bold;line-height:28px;text-align:center;letter-spacing:-1px">in</div>
 <!-- ubuntu -->
 <div class="a" style="left:1184px;top:15px;width:30px;height:30px;background:#e95420"></div>
 <svg style="left:1189px;top:20px" width="20" height="20" viewBox="0 0 20 20"><circle cx="10" cy="10" r="6.5" stroke="#fff" stroke-width="2.3" fill="none"/><circle cx="3.5" cy="10" r="2.6" fill="#fff" stroke="#e95420" stroke-width="1"/><circle cx="13.3" cy="4.3" r="2.6" fill="#fff" stroke="#e95420" stroke-width="1"/><circle cx="13.3" cy="15.7" r="2.6" fill="#fff" stroke="#e95420" stroke-width="1"/></svg>
 <!-- telegram -->
 <svg style="left:1240px;top:16px" width="28" height="28" viewBox="0 0 28 28"><circle cx="14" cy="14" r="14" fill="#2aa3df"/><path d="M6 13.5 L21 8 L18.5 20.5 L13.5 17 L11.5 19.5 L11.5 15.5 L18 10.5 L10 14.8 Z" fill="#fff"/></svg>
 <!-- github -->
 <svg style="left:1295px;top:16px" width="28" height="28" viewBox="0 0 16 16"><path fill="#f0f0f0" d="M8 0C3.58 0 0 3.58 0 8c0 3.54 2.29 6.53 5.47 7.59.4.07.55-.17.55-.38 0-.19-.01-.82-.01-1.49-2.01.37-2.53-.49-2.69-.94-.09-.23-.48-.94-.82-1.13-.28-.15-.68-.52-.01-.53.63-.01 1.08.58 1.23.82.72 1.21 1.87.87 2.33.66.07-.52.28-.87.51-1.07-1.78-.2-3.64-.89-3.64-3.95 0-.87.31-1.59.82-2.15-.08-.2-.36-1.02.08-2.12 0 0 .67-.21 2.2.82.64-.18 1.32-.27 2-.27.68 0 1.36.09 2 .27 1.53-1.04 2.2-.82 2.2-.82.44 1.1.16 1.92.08 2.12.51.56.82 1.27.82 2.15 0 3.07-1.87 3.75-3.65 3.95.29.25.54.73.54 1.48 0 1.07-.01 1.93-.01 2.2 0 .21.15.46.55.38A8.013 8.013 0 0016 8c0-4.42-3.58-8-8-8z"/></svg>
 <div class="a" style="left:1309px;top:9px;width:21px;height:21px;border-radius:50%;background:#7a5ac8;color:#f0e8ff;font-size:11px;line-height:21px;text-align:center">K</div>
 <div class="a" style="left:1304px;top:49px;width:11px;height:3px;border-radius:2px;background:#8a8a8a"></div>
 <!-- terminal -->
 <div class="a" style="left:1349px;top:17px;width:30px;height:26px;border-radius:3px;background:#4a4a4a"></div>
 <div class="a" style="left:1349px;top:17px;width:30px;height:5px;border-radius:3px 3px 0 0;background:#6a6a6a"></div>
 <svg style="left:1353px;top:25px" width="22" height="14" viewBox="0 0 22 14"><path d="M1 1.5 L6 5.5 L1 9.5" stroke="#fff" stroke-width="2" fill="none"/><path d="M9 11 H19" stroke="#fff" stroke-width="2"/></svg>
 <div class="a" style="left:1358px;top:49px;width:11px;height:3px;border-radius:2px;background:#8a8a8a"></div>
 <!-- powerpoint -->
 <svg style="left:1403px;top:15px" width="31" height="30" viewBox="0 0 31 30"><defs><linearGradient id="pp" x1="0" y1="0" x2="1" y2="1"><stop offset="0" stop-color="#ff9a6a"/><stop offset=".5" stop-color="#e8404a"/><stop offset="1" stop-color="#c4203a"/></linearGradient></defs><circle cx="17" cy="15" r="14" fill="url(#pp)"/><path d="M17 1 A14 14 0 0 1 31 15 H17 Z" fill="#ffb080"/><rect x="0" y="13" width="14" height="15" rx="2" fill="#c42b1c"/><text x="3" y="25" font-family="Liberation Sans" font-weight="bold" font-size="11" fill="#fff">P</text></svg>
 <div class="a" style="left:1413px;top:49px;width:11px;height:3px;border-radius:2px;background:#8a8a8a"></div>
 <!-- vscode -->
 <svg style="left:1458px;top:15px" width="31" height="31" viewBox="0 0 31 31"><path d="M22 1 L30 5 V26 L22 30 L8 17 L3 21 L1 19.5 V11.5 L3 10 L8 14 Z M22 9 L13 15.5 L22 22 Z" fill="#1f9cf0"/><path d="M22 1 L30 5 V26 L22 30 Z" fill="#0065a9"/></svg>
 <div class="a" style="left:1468px;top:49px;width:11px;height:3px;border-radius:2px;background:#8a8a8a"></div>
 <!-- tray -->
 <svg style="left:1586px;top:25px" width="14" height="9" viewBox="0 0 14 9"><path d="M1 8 L7 1.5 L13 8" stroke="#fff" stroke-width="1.6" fill="none"/></svg>
 <svg style="left:1622px;top:19px" width="22" height="22" viewBox="0 0 22 22"><g stroke="#f0f0f0" stroke-width="1.3" fill="none"><path d="M3 10 A7.5 7.5 0 0 1 17 6"/><path d="M14 6 H18 V2"/><path d="M18 12 A7.5 7.5 0 0 1 5 17"/><path d="M7 18 H3 V21"/></g><circle cx="15.5" cy="15" r="4.5" fill="#f59a0a"/></svg>
 <div class="a" style="left:1666px;top:10px;width:30px;font-size:14.5px;line-height:20px;color:#fff;text-align:center">ENG<br>IN</div>
 <svg style="left:1717px;top:21px" width="22" height="17" viewBox="0 0 22 17"><g stroke="#fff" stroke-width="1.6" fill="none"><path d="M1 5.5 C6.5 0.5 15.5 0.5 21 5.5"/><path d="M4.5 9 C8 6 14 6 17.5 9"/><path d="M8 12.5 C9.5 11 12.5 11 14 12.5"/></g><circle cx="11" cy="15.5" r="1.4" fill="#fff"/></svg>
 <svg style="left:1747px;top:20px" width="21" height="19" viewBox="0 0 21 19"><g stroke="#fff" stroke-width="1.4" fill="none"><path d="M1 6.5 H4.5 L9 2 V17 L4.5 12.5 H1 Z"/><path d="M12.5 7 L18 12.5 M18 7 L12.5 12.5"/></g></svg>
 <svg style="left:1777px;top:19px" width="23" height="20" viewBox="0 0 23 20"><g stroke="#fff" stroke-width="1.4" fill="none"><rect x="3" y="6" width="15" height="10" rx="2"/><path d="M18.5 9 H20.5 V13 H18.5"/></g><path d="M2 13 C1 7 5 3 11 2 C10 6 8 10 2 13 Z" fill="#fff"/><path d="M7 14 L11 9 L9 13" stroke="#1c1c1c" stroke-width="1" fill="none"/></svg>
 <div class="a" style="left:1800px;top:10px;width:96px;font-size:14.5px;line-height:20px;color:#fff;text-align:right">14:58<br>03-11-2025</div>
</div>

</body></html>
